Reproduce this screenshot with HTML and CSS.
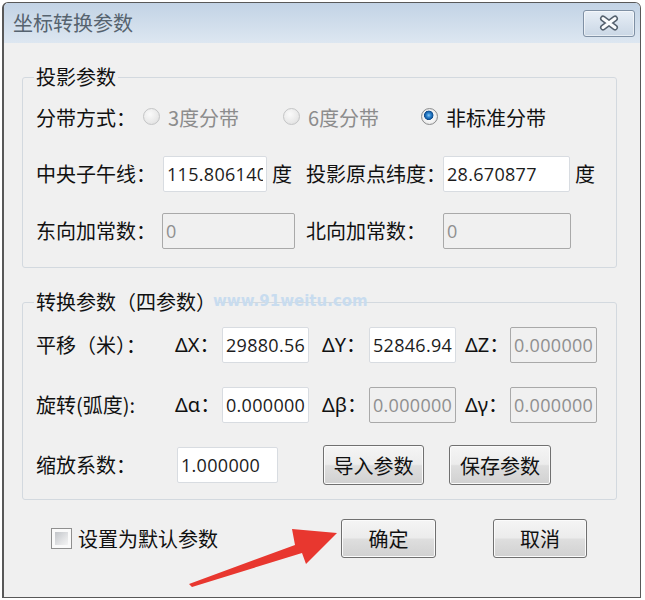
FILE: index.html
```html
<!doctype html>
<html lang="zh-CN">
  <head>
    <meta charset="UTF-8" />
    <title>坐标转换参数</title>
    <link rel="stylesheet" href="styles.css">
  </head>
  <body>
    <div class="window">
      <div class="titlebar">
        <span class="title">坐标转换参数</span>
        <button class="close" title="关闭">
          <svg width="22" height="16" viewBox="0 0 22 16">
            <path d="M5 3.5 L17 12.5 M17 3.5 L5 12.5" stroke="#56626f" stroke-width="6" stroke-linecap="round" />
            <path d="M5 3.5 L17 12.5 M17 3.5 L5 12.5" stroke="#fbfcfd" stroke-width="3" stroke-linecap="round" />
          </svg>
        </button>
      </div>

      <div class="client">
        <fieldset class="group group-proj">
          <legend>投影参数</legend>

          <div class="row">
            <span class="label w-zone">分带方式：</span>
            <label class="option opt-3 disabled">
              <input class="radio" type="radio" name="zone" disabled />
              <span>3度分带</span>
            </label>
            <label class="option opt-6 disabled">
              <input class="radio" type="radio" name="zone" disabled />
              <span>6度分带</span>
            </label>
            <label class="option">
              <input class="radio" type="radio" name="zone" checked />
              <span>非标准分带</span>
            </label>
          </div>

          <div class="row">
            <span class="label w-meridian">中央子午线：</span>
            <input class="field w-meridian-in" type="text" value="115.806140" />
            <span class="unit w-unit">度</span>
            <span class="label w-right">投影原点纬度：</span>
            <input class="field w-lat-in" type="text" value="28.670877" />
            <span class="unit">度</span>
          </div>

          <div class="row row-last">
            <span class="label w-east">东向加常数：</span>
            <input class="field w-east-in" type="text" value="0" disabled />
            <span class="label w-right gap-right">北向加常数：</span>
            <input class="field w-north-in" type="text" value="0" disabled />
          </div>
        </fieldset>

        <fieldset class="group group-trans">
          <legend>转换参数（四参数）</legend>

          <div class="params">
            <span class="label">平移（米）：</span>
            <span class="dlabel">ΔX：</span>
            <input class="field" type="text" value="29880.56" />
            <span class="dlabel d2">ΔY：</span>
            <input class="field" type="text" value="52846.94" />
            <span class="dlabel d3">ΔZ：</span>
            <input class="field" type="text" value="0.000000" disabled />

            <span class="label">旋转(弧度):</span>
            <span class="dlabel">Δα：</span>
            <input class="field" type="text" value="0.000000" />
            <span class="dlabel d2">Δβ：</span>
            <input class="field" type="text" value="0.000000" disabled />
            <span class="dlabel d3">Δγ：</span>
            <input class="field" type="text" value="0.000000" disabled />
          </div>

          <div class="row row-scale">
            <span class="label w-scale">缩放系数：</span>
            <input class="field w-scale-in" type="text" value="1.000000" />
            <button class="btn btn-import">导入参数</button>
            <button class="btn btn-save">保存参数</button>
          </div>
        </fieldset>

        <div class="footer">
          <label class="remember">
            <input class="check" type="checkbox" />
            <span>设置为默认参数</span>
          </label>
          <button class="btn btn-ok">确定</button>
          <button class="btn btn-cancel">取消</button>
        </div>
      </div>
    </div>

    <div class="watermark">www.91weitu.com</div>

    <svg class="arrow" viewBox="0 0 645 600" width="645" height="600">
      <polygon points="189,584 295,545 292,529 337,533 306,564 302,553 192,587" fill="#e8372f" />
    </svg>
  </body>
</html>
```

FILE: styles.css
```css
* {
  margin: 0;
  padding: 0;
  box-sizing: border-box;
}

body {
  position: relative;
  background: #fff;
  font-family: "Noto Sans CJK SC", sans-serif;
  font-size: 20px;
  line-height: 24px;
  color: #111;
}

.window {
  width: 639px;
  height: 596px;
  margin: 2px;
  border: 1px solid #585858;
  border-left-width: 2px;
  border-radius: 6px 6px 0 0;
  background: #f0f0f0;
  overflow: hidden;
}

.titlebar {
  height: 40px;
  display: flex;
  align-items: center;
  justify-content: space-between;
  padding: 0 5px 0 9px;
  background: linear-gradient(#c2d3e5 0%, #d2dfec 60%, #dde7f1 100%);
}

.title {
  color: #56636f;
}

.close {
  width: 52px;
  height: 27px;
  display: flex;
  align-items: center;
  justify-content: center;
  border: 1px solid #7f90a4;
  border-radius: 3px;
  background: linear-gradient(#e7eef6, #cad7e5);
  box-shadow: inset 0 0 0 1px rgba(255, 255, 255, 0.55);
}

.client {
  padding: 22px 23px 0 18px;
}

/* group boxes */

.group {
  border: 1px solid #d3d9df;
  border-radius: 3px;
  padding: 11px 0 18px 13px;
}

.group legend {
  padding: 0 2px;
  margin-left: -2px;
  line-height: 24px;
}

.group-trans {
  margin-top: 22px;
  padding: 13px 0 14px 13px;
}

.row {
  display: flex;
  align-items: center;
  height: 36px;
}

.row + .row {
  margin-top: 20px;
}

.row-last {
  margin-top: 21px !important;
}

.label,
.unit,
.dlabel,
.option {
  flex: none;
  white-space: nowrap;
}

.w-zone { width: 107px; }
.w-meridian { width: 127px; }
.w-meridian-in { width: 104px; }
.w-unit { width: 39px; }
.w-right { width: 137px; }
.w-lat-in { width: 127px; }
.w-east { width: 126px; }
.w-east-in { width: 133px; }
.gap-right { margin-left: 11px; }
.w-north-in { width: 128px; }
.w-scale { width: 141px; }
.w-scale-in { width: 101px; height: 37px; }

.unit {
  padding-left: 5px;
}

/* radio options */

.option {
  display: flex;
  align-items: center;
  gap: 8px;
}

.opt-3 { width: 140px; }
.opt-6 { width: 138px; }

.option.disabled {
  color: #8c8c8c;
}

.radio {
  appearance: none;
  width: 17px;
  height: 17px;
  margin-top: -3px;
  border-radius: 50%;
  border: 1px solid #8c8d8e;
  background: radial-gradient(circle, #ffffff 0%, #f2f2f2 50%, #d6d6d6 100%);
}

.radio:disabled {
  border-color: #c4c5c6;
  background: radial-gradient(circle at 40% 35%, #fafafa 0%, #e9e9e9 60%, #d9d9d9 100%);
}

.radio:checked {
  background:
    radial-gradient(circle at 45% 42%, #8ccdf5 0, #2f86d3 2px, #0f4d8e 4.4px, transparent 5px),
    radial-gradient(circle, #ffffff 0%, #f2f2f2 55%, #d2d2d2 100%);
}

/* text fields */

.field {
  flex: none;
  height: 36px;
  padding: 0 3px;
  border: 1px solid #d8dce1;
  border-radius: 2px;
  background: #fff;
  font-family: "Open Sans", "Noto Sans", sans-serif;
  font-size: 18px;
  letter-spacing: 0.3px;
  color: #1c1c1c;
  outline: none;
}

.field:disabled {
  background: #f0f0f0;
  border-color: #a9a9a9;
  color: #8f8f8f;
}

/* translation / rotation grid */

.params {
  display: grid;
  grid-template-columns: 139px 47px 87px 60px 87px 54px 87px;
  grid-auto-rows: 36px;
  row-gap: 24px;
  align-items: center;
}

.params .field {
  width: 87px;
}

.dlabel {
  font-family: "Noto Sans", "Noto Sans CJK SC", sans-serif;
}

.dlabel.d2 { padding-left: 13px; }
.dlabel.d3 { padding-left: 9px; }

.row-scale {
  height: 40px;
  margin-top: 22px !important;
}

/* buttons */

.btn {
  flex: none;
  height: 40px;
  border: 1px solid #707070;
  border-radius: 3px;
  background: linear-gradient(#f5f5f5 0%, #ececec 48%, #dedede 52%, #d1d1d1 100%);
  box-shadow: inset 0 0 0 1px #fbfbfb;
  font-family: inherit;
  font-size: 20px;
  color: #111;
}

.btn-import {
  width: 101px;
  margin-left: 45px;
}

.btn-save {
  width: 102px;
  margin-left: 25px;
}

.footer {
  display: flex;
  align-items: center;
  margin-top: 19px;
  padding-left: 29px;
}

.remember {
  flex: none;
  width: 290px;
  display: flex;
  align-items: center;
  gap: 6px;
}

.check {
  appearance: none;
  width: 21px;
  height: 21px;
  padding: 3px;
  border: 1px solid #8f8f8f;
  background:
    linear-gradient(135deg, #c2c5c9 0%, #e2e3e5 60%, #f4f4f4 100%) content-box,
    #fafafa;
}

.btn-ok {
  width: 95px;
  height: 39px;
}

.btn-cancel {
  width: 94px;
  height: 39px;
  margin-left: 57px;
}

/* overlays that sit on the screenshot */

.watermark {
  position: absolute;
  left: 213px;
  top: 291px;
  font-family: "DejaVu Sans", sans-serif;
  font-weight: bold;
  font-size: 15px;
  line-height: 20px;
  color: #c8dcef;
}

.arrow {
  position: absolute;
  left: 0;
  top: 0;
  pointer-events: none;
}
```
